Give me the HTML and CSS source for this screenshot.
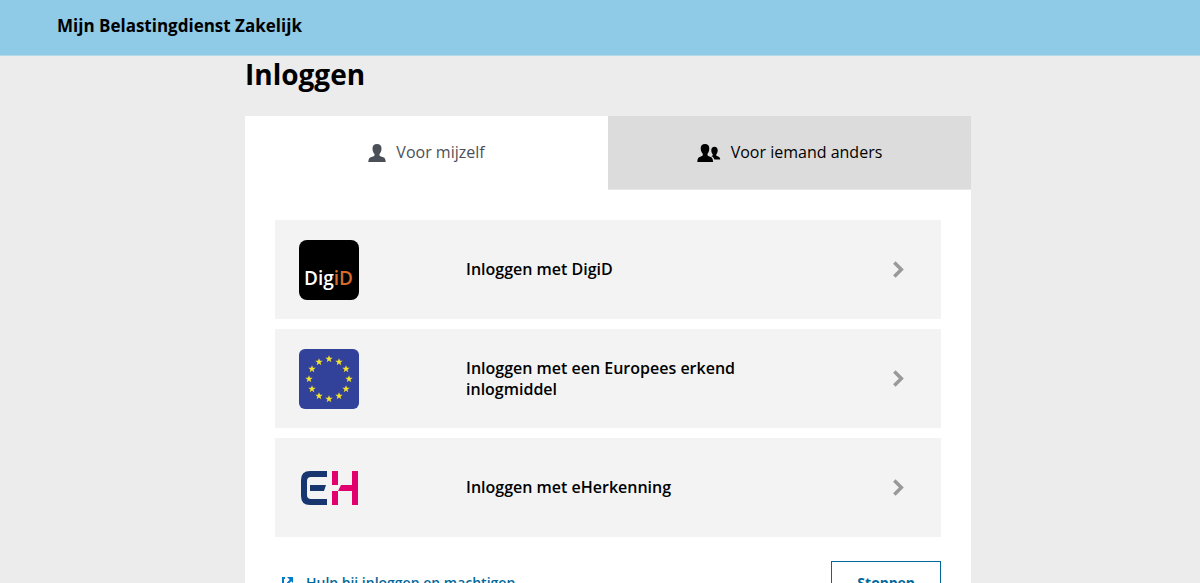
FILE: index.html
```
<!DOCTYPE html>
<html lang="nl">
<head>
    <meta charset="UTF-8">
    <meta name="viewport" content="width=device-width, initial-scale=1.0">
    <title>Inloggen</title>
    <link rel="stylesheet" href="styles.css">
</head>
<body>
    <header class="header">Mijn Belastingdienst Zakelijk</header>
    <main class="main">
        <h1>Inloggen</h1>
        <div class="panel">
            <div class="tabs" role="tablist">
                <button class="tab active" type="button" role="tab" aria-selected="true">
                    <svg width="18" height="18" viewBox="0 0 18 18" fill="currentColor"><path d="M9 0c3 0 4.500 1.700 4.500 4.500 0 2.500-.8 4.300-2 5.500v1.200c0 .5.300.8.800 1l3 1c1.500.5 2.300 1.900 2.400 4.800H.3c.1-2.900.9-4.300 2.400-4.800l3-1c.5-.2.800-.5.800-1V10c-1.200-1.200-2-3-2-5.500C4.500 1.700 6 0 9 0z"/></svg>
                    <span>Voor mijzelf</span>
                </button>
                <button class="tab" type="button" role="tab" aria-selected="false">
                    <svg width="24" height="18" viewBox="0 0 24 18" fill="currentColor"><path d="M8 0c2.900 0 4.300 1.600 4.300 4.300 0 2.400-.7 4.200-1.800 5.400v1.400c0 .5.300.8.800 1l2.400 1c1.500.6 2.300 2 2.400 4.900H.3c.1-2.900.9-4.300 2.400-4.900l2.300-1c.5-.2.800-.5.800-1V9.700C4.700 8.500 3.700 6.700 3.700 4.300 3.700 1.600 5.100 0 8 0z"/><path d="M17.500 2.800c2 0 3.200 1.300 3.200 3.400 0 1.700-.5 3.100-1.400 4v1c0 .4.200.6.600.8l1.300.5c1.300.5 1.900 1.400 2 3.100h-5.800c-.5-1.700-1.400-2.700-2.800-3.300l-.5-.2c1-.3 1.600-.6 1.600-1.200v-.7c-.9-.9-1.400-2.300-1.400-4 0-2.100 1.200-3.400 3.200-3.400z"/></svg>
                    <span>Voor iemand anders</span>
                </button>
            </div>
            <div class="content">
                <a class="option" href="#">
                    <svg class="logo" viewBox="0 0 60 60">
                        <rect width="60" height="60" rx="8" fill="#000"/>
                        <text class="digid" x="5" y="45" fill="#fff">Dig<tspan fill="#d8692a">iD</tspan></text>
                    </svg>
                    <span class="label">Inloggen met DigiD</span>
                    <svg class="arrow" viewBox="0 0 12 16"><path d="M2 2l6 6-6 6"/></svg>
                </a>
                <a class="option" href="#">
                    <svg class="logo" viewBox="0 0 60 60">
                        <defs><path id="star" fill="#f3e32f" d="M0-3.800L1-1.200 3.700-1.200 1.500.5 2.300 3.200 0 1.600-2.300 3.200-1.500.5-3.700-1.200-1-1.200z"/></defs>
                        <rect width="60" height="60" rx="6" fill="#324199"/>
                        <use href="#star" x="30" y="10"/>
                        <use href="#star" x="40" y="13"/>
                        <use href="#star" x="47" y="20"/>
                        <use href="#star" x="50" y="30"/>
                        <use href="#star" x="47" y="40"/>
                        <use href="#star" x="40" y="47"/>
                        <use href="#star" x="30" y="50"/>
                        <use href="#star" x="20" y="47"/>
                        <use href="#star" x="13" y="40"/>
                        <use href="#star" x="10" y="30"/>
                        <use href="#star" x="13" y="20"/>
                        <use href="#star" x="20" y="13"/>
                    </svg>
                    <span class="label">Inloggen met een Europees erkend inlogmiddel</span>
                    <svg class="arrow" viewBox="0 0 12 16"><path d="M2 2l6 6-6 6"/></svg>
                </a>
                <a class="option" href="#">
                    <svg class="logo" viewBox="0 0 60 60">
                        <path fill="#17356f" d="M28 13v6H12q-4 0-4 4v14q0 4 4 4h16v6H11Q2 47 2 38V22Q2 13 11 13zM11 27h16l-2 6H11z"/>
                        <path fill="#e2006e" d="M33 13h6v14h-6zM33 33h6v14h-6zM53 13h6v34h-6V33H39l3-6h11z"/>
                    </svg>
                    <span class="label">Inloggen met eHerkenning</span>
                    <svg class="arrow" viewBox="0 0 12 16"><path d="M2 2l6 6-6 6"/></svg>
                </a>
                <div class="actions">
                    <a class="help" href="#">
                        <svg width="12" height="12" viewBox="0 0 12 12" fill="none" stroke="currentColor" stroke-width="2"><path d="M3 1H1v10h9V9M4 8l5-5"/><path fill="currentColor" stroke="none" d="M5 0h6v6z"/></svg>
                        <span>Hulp bij inloggen en machtigen</span>
                    </a>
                    <button class="stop" type="button">Stoppen</button>
                </div>
            </div>
        </div>
    </main>
</body>
</html>
```
FILE: styles.css
```
* {
    box-sizing: border-box;
    margin: 0;
    padding: 0;
}

body {
    color: #000;
    background: #ececec;
    font-family: 'Open Sans', 'Noto Sans', sans-serif;
    font-size: 16px;
    line-height: 21px;
}

button {
    font: inherit;
    cursor: pointer;
}

a {
    text-decoration: none;
}

.header {
    padding: 15px 57px 19px;
    background: #8fcae7;
    border-bottom: 1px solid #b5d8e8;
    font-size: 17px;
    font-weight: 700;
}

.main {
    max-width: 742px;
    margin: 0 auto;
    padding: 0 0 30px 16px;
}

h1 {
    padding-bottom: 24px;
    font-size: 28px;
    line-height: 36px;
    font-weight: 700;
}

.panel {
    background: #fff;
}

.tabs {
    display: flex;
}

.tab {
    flex: 1;
    display: flex;
    align-items: center;
    justify-content: center;
    gap: 10px;
    height: 74px;
    border: 0;
    border-bottom: 1px solid #e8e8e8;
    background: #dcdcdc;
    color: #000;
}

.tab.active {
    border-color: #fff;
    background: #fff;
    color: #4b5058;
}

.content {
    padding: 30px;
}

.option {
    display: flex;
    align-items: center;
    min-height: 99px;
    margin-bottom: 10px;
    padding: 0 35px 0 24px;
    background: #f3f3f3;
    color: #000;
    font-weight: 600;
}

.logo {
    flex: none;
    width: 60px;
    height: 60px;
    margin-right: 107px;
}

.digid {
    font-size: 19px;
    font-weight: 600;
}

.label {
    max-width: 290px;
}

.arrow {
    width: 14px;
    height: 19px;
    margin-left: auto;
    fill: none;
    stroke: #999;
    stroke-width: 3;
}

.actions {
    display: flex;
    align-items: center;
    justify-content: space-between;
    padding-top: 14px;
    color: #01689b;
    font-size: 14px;
    font-weight: 600;
}

.help {
    display: flex;
    align-items: center;
    gap: 12px;
    padding-left: 7px;
    color: #01689b;
}

.help svg {
    color: #007bc7;
}

.stop {
    height: 43px;
    padding: 0 25px;
    border: 1px solid #01689b;
    background: #fff;
    color: #01689b;
    font-weight: 700;
}
```
